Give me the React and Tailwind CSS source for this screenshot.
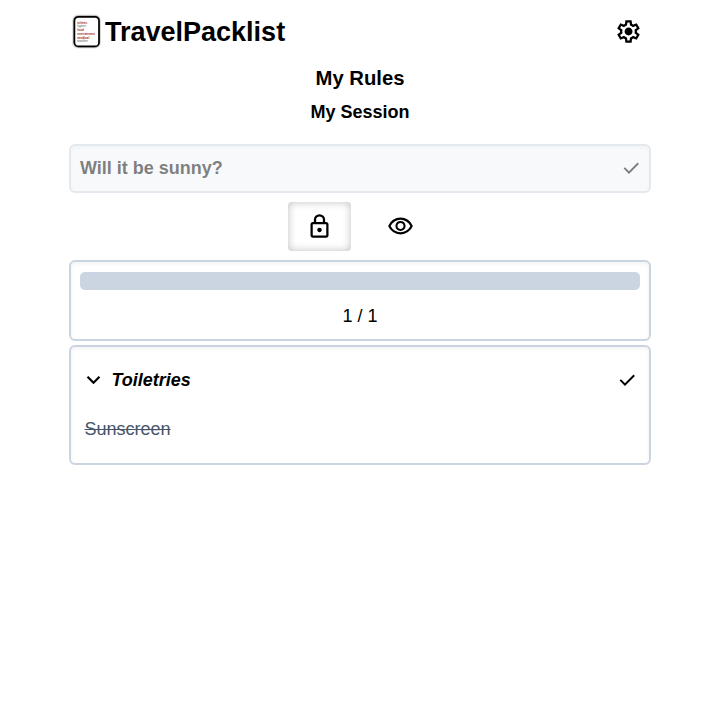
const ICONS = {
  settings:
    'm370-80-16-128q-13-5-24.5-12T307-235l-119 50L78-375l103-78q-1-7-1-13.5v-27q0-6.5 1-13.5L78-585l110-190 119 50q11-8 23-15t24-12l16-128h220l16 128q13 5 24.5 12t22.5 15l119-50 110 190-103 78q1 7 1 13.5v27q0 6.5-2 13.5l103 78-110 190-118-50q-11 8-23 15t-24 12L590-80H370Zm70-80h79l14-106q31-8 57.5-23.5T639-327l99 41 39-68-86-65q5-14 7-29.5t2-31.5q0-16-2-31.5t-7-29.5l86-65-39-68-99 42q-22-23-48.5-38.5T533-694l-13-106h-79l-14 106q-31 8-57.5 23.5T321-633l-99-41-39 68 86 64q-5 15-7 30t-2 32q0 16 2 31t7 30l-86 65 39 68 99-42q22 23 48.5 38.5T427-266l13 106Zm42-180q58 0 99-41t41-99q0-58-41-99t-99-41q-59 0-99.5 41T342-480q0 58 40.5 99t99.5 41Z',
  lock: 'M240-80q-33 0-56.5-23.5T160-160v-400q0-33 23.5-56.5T240-640h40v-80q0-83 58.5-141.5T480-920q83 0 141.5 58.5T680-720v80h40q33 0 56.5 23.5T800-560v400q0 33-23.5 56.5T720-80H240Zm0-80h480v-400H240v400Zm240-120q33 0 56.5-23.5T560-360q0-33-23.5-56.5T480-440q-33 0-56.5 23.5T400-360q0 33 23.5 56.5T480-280ZM360-640h240v-80q0-50-35-85t-85-35q-50 0-85 35t-35 85v80Z',
  eye: 'M480-320q75 0 127.5-52.5T660-500q0-75-52.5-127.5T480-680q-75 0-127.5 52.5T300-500q0 75 52.5 127.5T480-320Zm0-72q-45 0-76.5-31.5T372-500q0-45 31.5-76.5T480-608q45 0 76.5 31.5T588-500q0 45-31.5 76.5T480-392Zm0 192q-146 0-266-81.5T40-500q54-137 174-218.5T480-800q146 0 266 81.5T920-500q-54 137-174 218.5T480-200Zm0-300Zm0 220q113 0 207.5-59.5T832-500q-50-101-144.5-160.5T480-720q-113 0-207.5 59.5T128-500q50 101 144.5 160.5T480-280Z',
  check: 'M382-240 154-468l57-57 171 171 367-367 57 57-424 424Z',
  chevron: 'M480-344 240-584l56-56 184 184 184-184 56 56-240 240Z',
};

function Icon({ name, className = 'size-[27px]' }) {
  return (
    <svg viewBox="0 -960 960 960" fill="currentColor" className={`shrink-0 ${className}`}>
      <path d={ICONS[name]} />
    </svg>
  );
}

function Logo() {
  return (
    <svg viewBox="0 0 32 38" className="h-[38px] w-8 shrink-0">
      <rect x="2" y="2.4" width="29" height="34.2" rx="6" fill="#e4e4e4" />
      <rect x="3" y="3.2" width="27.2" height="32.6" rx="5.5" fill="#b0b0b0" />
      <rect x="4.4" y="4.8" width="24.6" height="29.6" rx="4" fill="#fff" stroke="#000" strokeWidth="1.7" />
      <g fontFamily="Liberation Sans, sans-serif" fontSize="2.9" fontWeight="bold">
        <text x="7.3" y="11.5" textLength="10" lengthAdjust="spacingAndGlyphs" fill="#9c1f2a">toiletries</text>
        <text x="7.3" y="15.2" textLength="8.5" lengthAdjust="spacingAndGlyphs" fill="#555" fontWeight="normal">hygiene</text>
        <text x="7.3" y="19" textLength="6.5" lengthAdjust="spacingAndGlyphs" fill="#9c1f2a">food</text>
        <text x="7.3" y="22.7" textLength="17.5" lengthAdjust="spacingAndGlyphs" fill="#9c1f2a">entertainment</text>
        <text x="7.3" y="26.5" textLength="12" lengthAdjust="spacingAndGlyphs" fill="#9c1f2a">medical</text>
        <text x="7.3" y="30.2" textLength="10.5" lengthAdjust="spacingAndGlyphs" fill="#555" fontWeight="normal">weather</text>
      </g>
    </svg>
  );
}

const PANEL = 'rounded-[6px] border-2 border-[#cbd5e1] shadow-[inset_0_2px_4px_rgba(0,0,0,0.05)]';

export default function App() {
  return (
    <div className="min-h-screen bg-white px-[69px] font-['Liberation_Sans',Arial,sans-serif] text-[18px] leading-[27px] text-black">
      <header className="flex h-[63px] items-center justify-between pr-[9px]">
        <div className="flex items-center">
          <div className="mb-px ml-px"><Logo /></div>
          <h1 className="ml-[3px] text-[27px] leading-9 font-bold">TravelPacklist</h1>
        </div>
        <Icon name="settings" className="mr-[0.5px] size-[27px]" />
      </header>
      <h2 className="text-center text-[20.25px] leading-[31.5px] font-bold">My Rules</h2>
      <h3 className="mt-1 text-center leading-[27px] font-bold">My Session</h3>

      <div className="mt-[18px] flex h-[49px] items-center justify-between rounded-[6px] border-2 border-[#cbd5e1] bg-[#f1f5f9] px-[9px] font-bold opacity-50 shadow-[inset_0_2px_4px_rgba(0,0,0,0.05)]">
        <span>Will it be sunny?</span>
        <Icon name="check" className="mr-[-2.25px] size-[22.5px]" />
      </div>

      <div className="mt-[9.5px] flex justify-center gap-[18px]">
        <button className="flex h-[48.5px] w-[63px] items-center justify-center rounded-[4px] shadow-[inset_0_0_9px_rgba(0,0,0,0.25)]">
          <Icon name="lock" />
        </button>
        <button className="flex h-[48.5px] w-[63px] items-center justify-center">
          <Icon name="eye" />
        </button>
      </div>

      <section className={`mt-[9px] h-[81px] px-[9px] pt-[10px] ${PANEL}`}>
        <div className="h-[18px] rounded-[5px] bg-[#cbd5e1]" />
        <p className="mt-[13px] text-center">1 / 1</p>
      </section>

      <section className={`mt-1 h-[120px] px-[13.5px] pt-[20px] ${PANEL}`}>
        <div className="flex items-center justify-between">
          <div className="flex items-center">
            <Icon name="chevron" className="ml-[-4.5px] size-[27px]" />
            <span className="ml-[4.5px] font-bold italic">Toiletries</span>
          </div>
          <Icon name="check" className="mr-[-3px] size-[22.5px]" />
        </div>
        <p className="mt-[22px] text-[#475569] line-through">Sunscreen</p>
      </section>
    </div>
  );
}
